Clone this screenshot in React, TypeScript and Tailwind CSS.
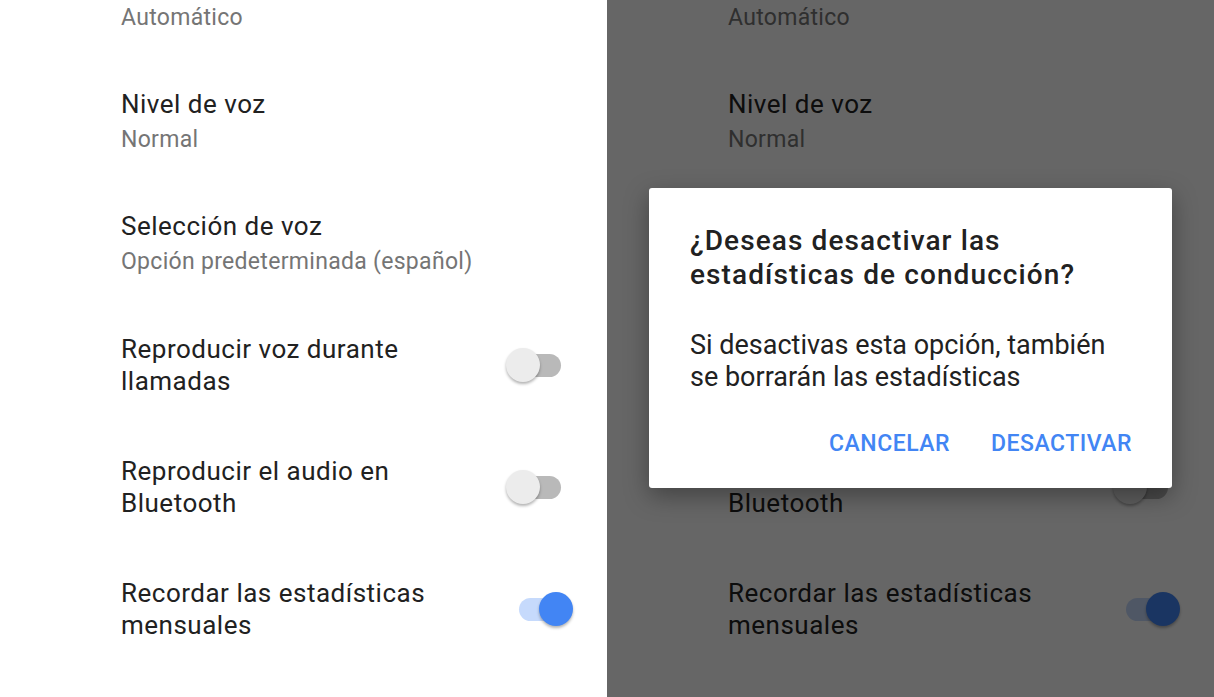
import React from 'react';

type Row = {
  title?: string[];
  subtitle?: string;
  toggle?: 'on' | 'off';
};

const rows: Row[] = [
  { title: ['Idioma de voz'], subtitle: 'Automático' },
  { title: ['Nivel de voz'], subtitle: 'Normal' },
  { title: ['Selección de voz'], subtitle: 'Opción predeterminada (español)' },
  { title: ['Reproducir voz durante', 'llamadas'], toggle: 'off' },
  { title: ['Reproducir el audio en', 'Bluetooth'], toggle: 'off' },
  { title: ['Recordar las estadísticas', 'mensuales'], toggle: 'on' },
];

function Toggle({ on }: { on: boolean }) {
  if (on) {
    return (
      <div className="relative w-[55px] h-[34px] flex items-center">
        <div className="ml-[1px] w-[52px] h-[23px] rounded-full bg-[#c6dafc]" />
        <div className="absolute right-0 top-0 w-[34px] h-[34px] rounded-full bg-[#4285f4] shadow-[0_2px_3px_rgba(0,0,0,0.3)]" />
      </div>
    );
  }
  return (
    <div className="relative w-[55px] h-[34px] flex items-center">
      <div className="ml-[3px] w-[52px] h-[23px] rounded-full bg-[#b9b9b9]" />
      <div className="absolute left-0 top-0 w-[34px] h-[34px] rounded-full bg-[#ececec] shadow-[0_2px_3px_rgba(0,0,0,0.3)]" />
    </div>
  );
}

function SettingsList() {
  return (
    <div className="h-full overflow-hidden bg-white">
      <div className="mt-[-62px]">
        {rows.map((r, i) => (
          <div key={i} className="h-[122px] flex items-center pl-[121px] pr-[34px]">
            <div className="flex-1">
              {r.title?.map((t) => (
                <div key={t} className="text-[26px] leading-[32px] tracking-[0.5px] text-[#212121]">
                  {t}
                </div>
              ))}
              {r.subtitle && (
                <div className="text-[23px] leading-[30px] tracking-[0.3px] mt-[5px] text-[#757575]">
                  {r.subtitle}
                </div>
              )}
            </div>
            {r.toggle && (
              <div className={r.toggle === 'on' ? 'mr-0' : 'mr-[12px]'}>
                <Toggle on={r.toggle === 'on'} />
              </div>
            )}
          </div>
        ))}
      </div>
    </div>
  );
}

export default function App() {
  return (
    <div
      className="w-[1214px] h-[697px] flex overflow-hidden"
      style={{ fontFamily: 'Roboto, "Noto Sans", sans-serif' }}
    >
      <div className="w-[607px] h-full">
        <SettingsList />
      </div>
      <div className="relative w-[607px] h-full">
        <SettingsList />
        <div className="absolute inset-0 bg-black/60" />
        <div className="absolute left-[42px] top-[188px] w-[523px] h-[300px] rounded-[3px] bg-white shadow-[0_8px_24px_rgba(0,0,0,0.35)] pl-[41px] pr-[30px] pt-[36px] flex flex-col">
          <div className="text-[28px] leading-[34px] font-medium tracking-[1.1px] text-[#212121] whitespace-nowrap">
            ¿Deseas desactivar las
            <br />
            estadísticas de conducción?
          </div>
          <div className="mt-[37px] text-[27px] leading-[32px] text-[#212121] whitespace-nowrap">
            Si desactivas esta opción, también
            <br />
            se borrarán las estadísticas
          </div>
          <div className="mt-[33px] mr-[10px] flex justify-end gap-[41px]">
            <button className="h-[36px] text-[23px] font-medium tracking-[0.5px] text-[#4285f4]">CANCELAR</button>
            <button className="h-[36px] text-[23px] font-medium tracking-[0.5px] text-[#4285f4]">DESACTIVAR</button>
          </div>
        </div>
      </div>
    </div>
  );
}
